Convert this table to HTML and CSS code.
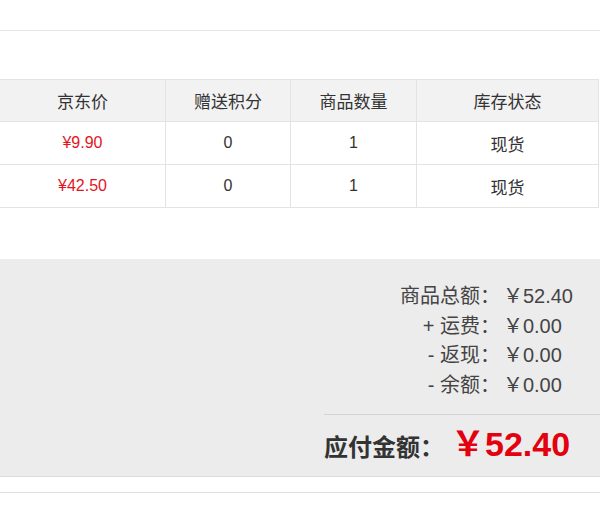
FILE: index.html
```html
<!DOCTYPE html>
<html lang="zh-CN">
<head>
    <meta charset="UTF-8">
    <title>订单结算</title>
    <link rel="stylesheet" href="styles.css">
</head>
<body>
    <div class="top-bar"></div>

    <table class="goods-table">
        <thead>
            <tr>
                <th class="col-price">京东价</th>
                <th class="col-score">赠送积分</th>
                <th class="col-num">商品数量</th>
                <th class="col-stock">库存状态</th>
            </tr>
        </thead>
        <tbody>
            <tr>
                <td class="price">¥9.90</td>
                <td>0</td>
                <td>1</td>
                <td class="stock">现货</td>
            </tr>
            <tr>
                <td class="price">¥42.50</td>
                <td>0</td>
                <td>1</td>
                <td class="stock">现货</td>
            </tr>
        </tbody>
    </table>

    <div class="summary">
        <div class="amounts">
            <span class="label">商品总额：</span><span class="value">￥52.40</span>
            <span class="label">+ 运费：</span><span class="value">￥0.00</span>
            <span class="label">- 返现：</span><span class="value">￥0.00</span>
            <span class="label">- 余额：</span><span class="value">￥0.00</span>
        </div>
        <div class="total">
            <span class="total-label">应付金额：</span>
            <span class="total-value">￥52.40</span>
        </div>
    </div>

    <div class="bottom-line"></div>
</body>
</html>
```

FILE: styles.css
```css
body {
    margin: 0;
    background: #fff;
    font-family: "Liberation Sans", "Noto Sans CJK SC", sans-serif;
    color: #333;
}
.top-bar {
    height: 30px;
    border-bottom: 1px solid #e6e6e6;
}
.goods-table {
    margin-top: 48px;
    width: 599px;
    border-collapse: collapse;
    font-size: 16px;
}
.goods-table th,
.goods-table td {
    border: 1px solid #e3e3e3;
    text-align: center;
    padding: 0;
    font-weight: normal;
}
.goods-table th {
    height: 41px;
    background: #f2f2f2;
    font-size: 17px;
}
.goods-table td {
    height: 42px;
    color: #333;
}
.goods-table td.stock {
    font-size: 17px;
}
.goods-table th:first-child,
.goods-table td:first-child {
    border-left: none;
}
.col-price { width: 165px; }
.col-score { width: 124px; }
.col-num { width: 125px; }
.goods-table td.price {
    color: #e4141e;
}
.summary {
    margin-top: 51px;
    background: #ececec;
    border-bottom: 1px solid #dcdcdc;
    padding: 23px 0 0 0;
    height: 194px;
    box-sizing: content-box;
}
.amounts {
    display: grid;
    grid-template-columns: auto auto;
    width: fit-content;
    margin-left: auto;
    margin-right: 27px;
    font-size: 20px;
    line-height: 29.5px;
    color: #444;
}
.amounts .label {
    text-align: right;
    padding-right: 3px;
}
.amounts .value {
    text-align: left;
}
.total {
    margin: 14px 0 0 324px;
    border-top: 1px solid #d4d4d4;
    padding-top: 2px;
    display: flex;
    align-items: baseline;
    gap: 7px;
}
.total-label {
    font-size: 24px;
    font-weight: bold;
    color: #333;
}
.total-value {
    font-size: 34px;
    font-weight: bold;
    color: #e3000f;
}
.bottom-line {
    margin-top: 15px;
    border-top: 1px solid #e0e0e0;
}
```
